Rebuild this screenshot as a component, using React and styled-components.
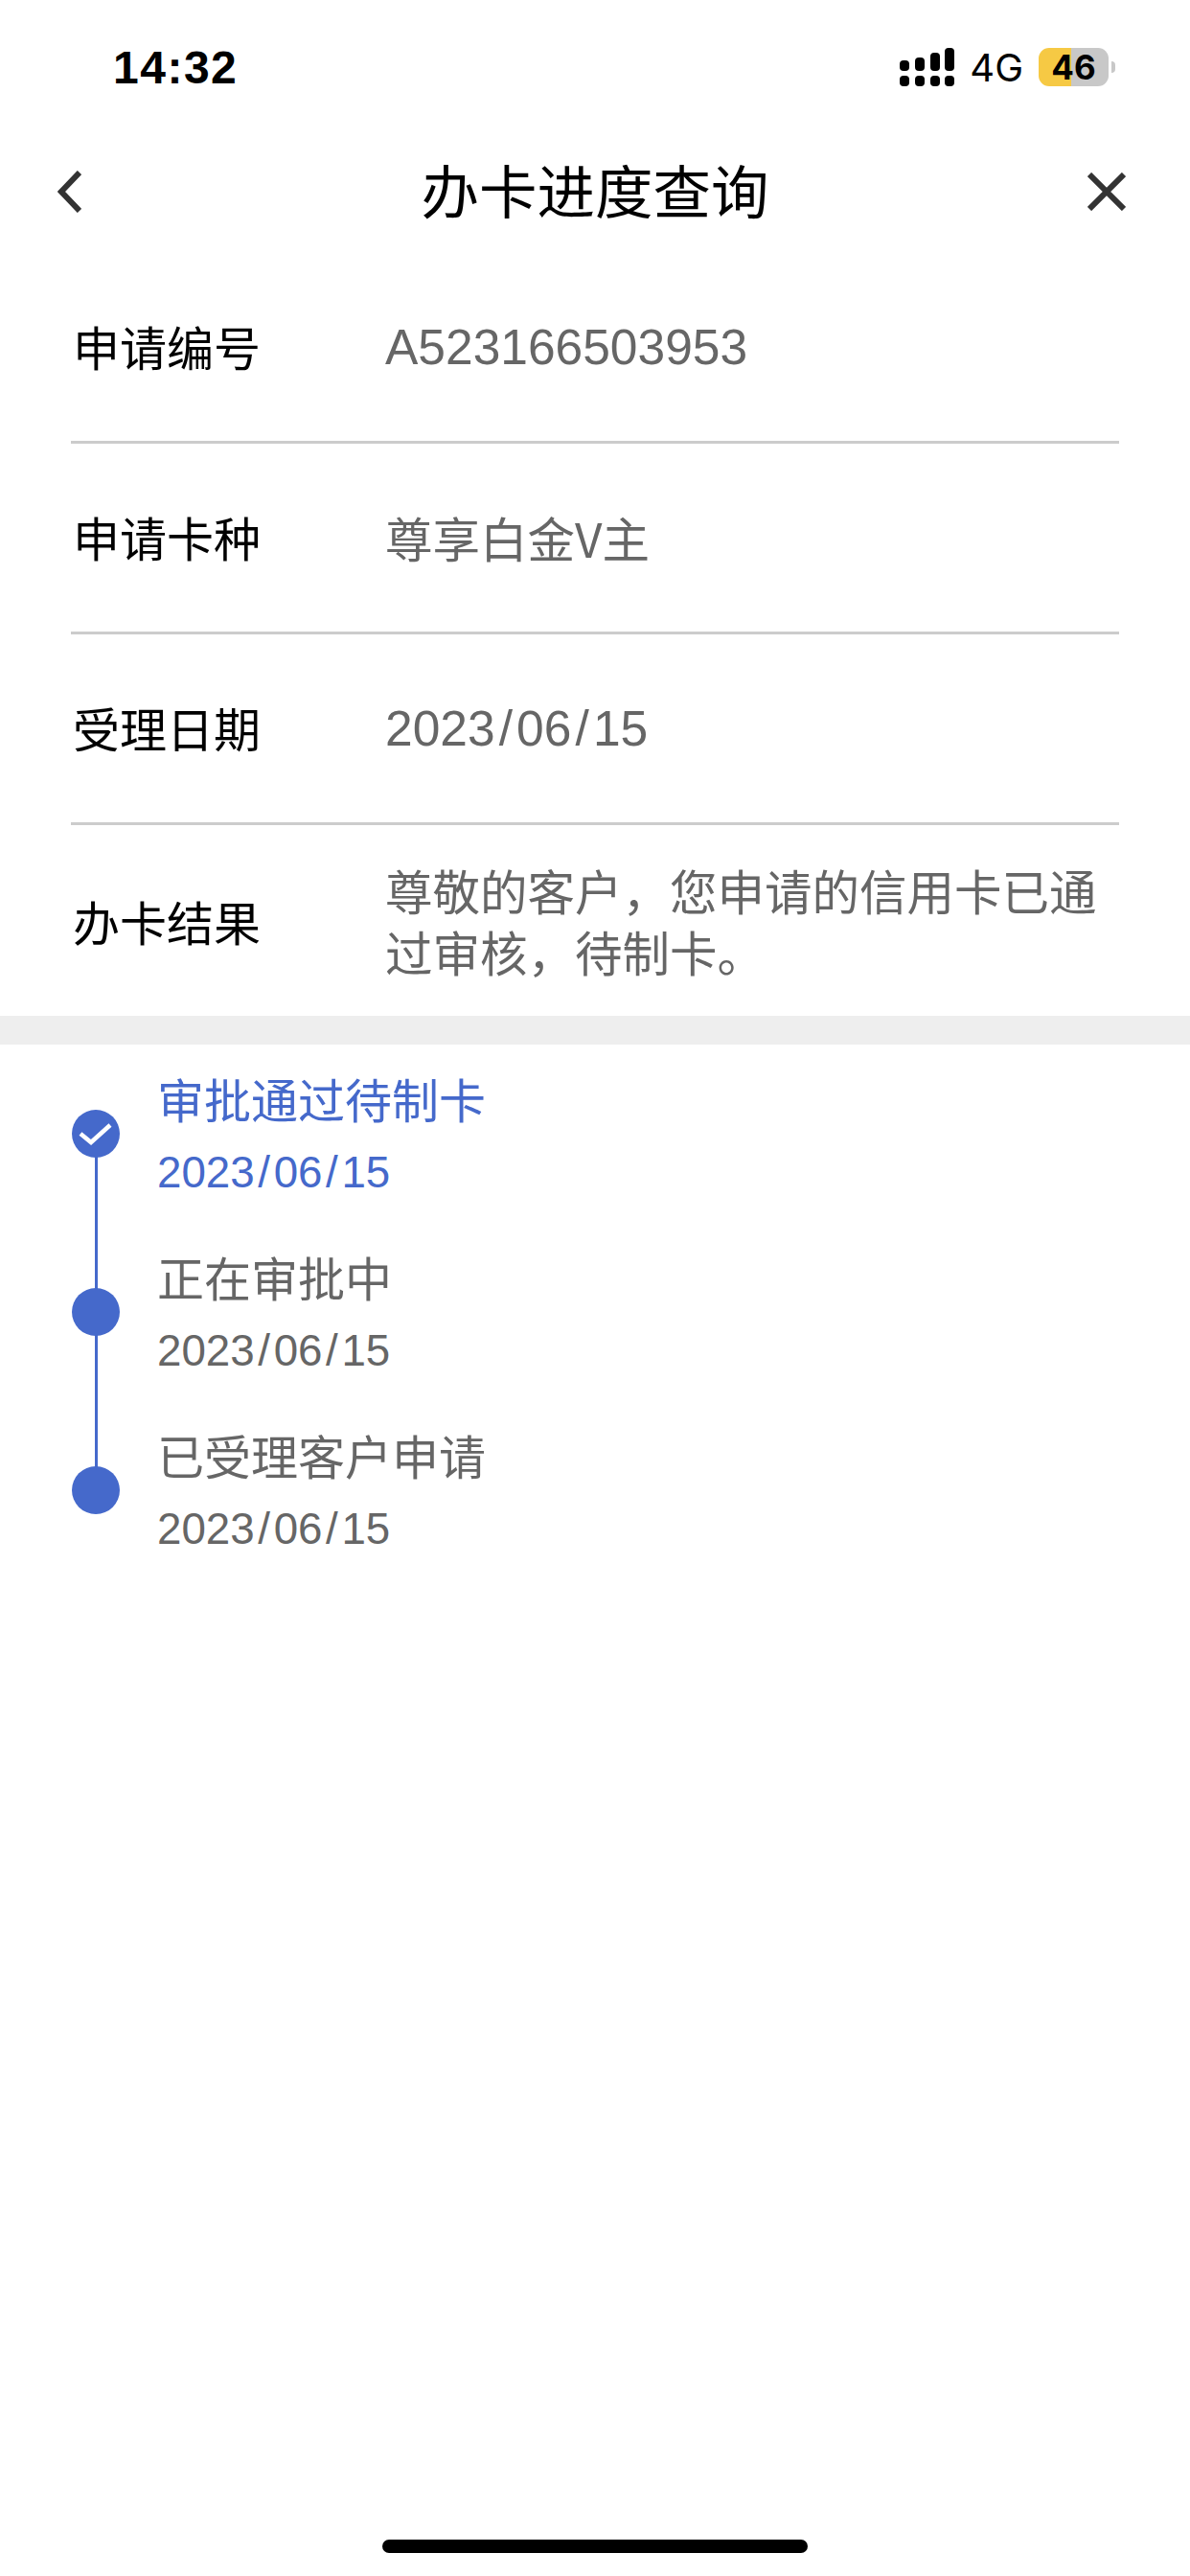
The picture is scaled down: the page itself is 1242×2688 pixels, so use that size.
import React from "react"
import styled, { createGlobalStyle } from "styled-components"

const GlobalStyle = createGlobalStyle`
  html, body {
    margin: 0;
    padding: 0;
    background: #fff;
  }
  body {
    font-family: "Liberation Sans", "Noto Sans CJK SC", sans-serif;
  }
`

const Page = styled.div`
  width: 1242px;
  height: 2688px;
  display: flex;
  flex-direction: column;
  background: #fff;
  overflow: hidden;
`

const StatusBar = styled.div`
  height: 140px;
  box-sizing: border-box;
  padding: 0 85px 0 118px;
  display: flex;
  align-items: center;
  justify-content: space-between;
`

const Time = styled.span`
  font: 700 48px "Liberation Sans", sans-serif;
  letter-spacing: 1.5px;
  color: #000;
`

const StatusIcons = styled.div`
  display: flex;
  align-items: center;
  gap: 16px;
`

const Network = styled.span`
  font: 400 40px "Inter", sans-serif;
  color: #000;
`

const Battery = styled.div`
  position: relative;
  width: 73px;
  height: 40px;
  border-radius: 11px;
  background: linear-gradient(to right, #f6c944 34px, #c8c8c8 34px);
  display: flex;
  align-items: center;
  justify-content: center;
  font: 700 35px "Inter", sans-serif;
  color: #000;

  &::after {
    content: "";
    position: absolute;
    right: -7px;
    top: 14px;
    width: 4px;
    height: 12px;
    border-radius: 0 4px 4px 0;
    background: #c8c8c8;
  }
`

const NavBar = styled.div`
  height: 120px;
  box-sizing: border-box;
  padding: 0 60px;
  display: grid;
  grid-template-columns: 1fr auto 1fr;
  align-items: center;
`

const NavTitle = styled.h1`
  margin: 0 0 7px;
  font: 400 60.5px "Noto Sans CJK SC", sans-serif;
  color: #000;
`

const CloseIcon = styled.svg`
  justify-self: end;
  margin-right: 7px;
`

const InfoList = styled.div`
  padding: 4px 74px 0;
`

const InfoRow = styled.div`
  height: 199px;
  box-sizing: border-box;
  display: flex;
  align-items: center;
  border-bottom: ${(props) => (props.$last ? "none" : "3px solid #cccccc")};
`

const Label = styled.span`
  width: 326px;
  flex-shrink: 0;
  padding: 0 0 ${(props) => (props.$last ? "0" : "3px")} 2px;
  font: 400 49px "Noto Sans CJK SC", sans-serif;
  color: #000;
`

const Value = styled.span`
  font: 400 ${(props) => (props.$latin ? "51.5px" : "49.5px")} / 64px
    ${(props) => (props.$latin ? '"Liberation Sans"' : '"Noto Sans CJK SC"')}, sans-serif;
  color: #666;
`

const Band = styled.div`
  height: 30px;
  background: #eeeeee;
`

const Timeline = styled.div`
  padding: 23px 0 0 75px;
  display: flex;
  flex-direction: column;
`

const Step = styled.div`
  height: 186px;
  display: flex;
  gap: 39px;
  color: ${(props) => (props.$active ? "#4569cb" : "#666")};
`

const Rail = styled.div`
  position: relative;
  width: 50px;
  flex-shrink: 0;
  padding-top: 45px;
  display: flex;
  justify-content: center;

  &::after {
    content: "";
    display: ${(props) => (props.$end ? "none" : "block")};
    position: absolute;
    left: 24px;
    top: 70px;
    width: 3px;
    height: 186px;
    background: #4569cb;
  }
`

const Dot = styled.div`
  position: relative;
  z-index: 1;
  width: 50px;
  height: 50px;
  border-radius: 50%;
  background: #4569cb;
  display: flex;
  align-items: center;
  justify-content: center;
`

const StepText = styled.div`
  display: flex;
  flex-direction: column;
`

const StepTitle = styled.span`
  font: 400 49px/66px "Noto Sans CJK SC", sans-serif;
`

const StepDate = styled.span`
  margin-top: 12px;
  font: 400 45.7px/66px "Liberation Sans", sans-serif;
`

const Slash = styled.span`
  padding: 0 0.08em;
`

const HomeBar = styled.div`
  width: 444px;
  height: 14px;
  margin: auto auto 24px;
  border-radius: 7px;
  background: #000;
`

const SignalIcon = () => (
  <svg width="57" height="40" viewBox="0 0 57 40" fill="#000">
    <rect x="0" y="29" width="10" height="11" rx="4" />
    <rect x="16" y="29" width="10" height="11" rx="4" />
    <rect x="32" y="29" width="10" height="11" rx="4" />
    <rect x="47" y="29" width="10" height="11" rx="4" />
    <rect x="0" y="13" width="10" height="11" rx="4" />
    <rect x="16" y="10" width="10" height="14" rx="4" />
    <rect x="32" y="5" width="10" height="19" rx="4" />
    <rect x="47" y="0" width="10" height="24" rx="4" />
  </svg>
)

// the reference font has a wider slash than Liberation Sans
const DateText = ({ value }) => {
  const [year, month, day] = value.split("/")
  return (
    <>
      {year}
      <Slash>/</Slash>
      {month}
      <Slash>/</Slash>
      {day}
    </>
  )
}

const rows = [
  { label: "申请编号", value: "A523166503953", latin: true },
  { label: "申请卡种", value: "尊享白金V主" },
  { label: "受理日期", value: <DateText value="2023/06/15" />, latin: true },
  { label: "办卡结果", value: "尊敬的客户，您申请的信用卡已通过审核，待制卡。", last: true },
]

const steps = [
  { title: "审批通过待制卡", date: "2023/06/15", active: true },
  { title: "正在审批中", date: "2023/06/15" },
  { title: "已受理客户申请", date: "2023/06/15", end: true },
]

export default function App() {
  return (
    <Page>
      <GlobalStyle />
      <StatusBar>
        <Time>14:32</Time>
        <StatusIcons>
          <SignalIcon />
          <Network>4G</Network>
          <Battery>46</Battery>
        </StatusIcons>
      </StatusBar>
      <NavBar>
        <svg width="25" height="44" viewBox="0 0 25 44" fill="none" stroke="#333" strokeWidth="6">
          <path d="M23 2 L4 22 L23 42" />
        </svg>
        <NavTitle>办卡进度查询</NavTitle>
        <CloseIcon width="40" height="40" viewBox="0 0 40 40" fill="none" stroke="#333" strokeWidth="6">
          <path d="M2 2 L38 38 M38 2 L2 38" />
        </CloseIcon>
      </NavBar>
      <InfoList>
        {rows.map((row) => (
          <InfoRow key={row.label} $last={row.last}>
            <Label $last={row.last}>{row.label}</Label>
            <Value $latin={row.latin}>{row.value}</Value>
          </InfoRow>
        ))}
      </InfoList>
      <Band />
      <Timeline>
        {steps.map((step) => (
          <Step key={step.title} $active={step.active}>
            <Rail $end={step.end}>
              <Dot>
                {step.active && (
                  <svg width="36" height="24" viewBox="0 0 36 24" fill="none" stroke="#fff" strokeWidth="4.5">
                    <path d="M2 12 L13 21 L33 3" />
                  </svg>
                )}
              </Dot>
            </Rail>
            <StepText>
              <StepTitle>{step.title}</StepTitle>
              <StepDate>
                <DateText value={step.date} />
              </StepDate>
            </StepText>
          </Step>
        ))}
      </Timeline>
      <HomeBar />
    </Page>
  )
}
